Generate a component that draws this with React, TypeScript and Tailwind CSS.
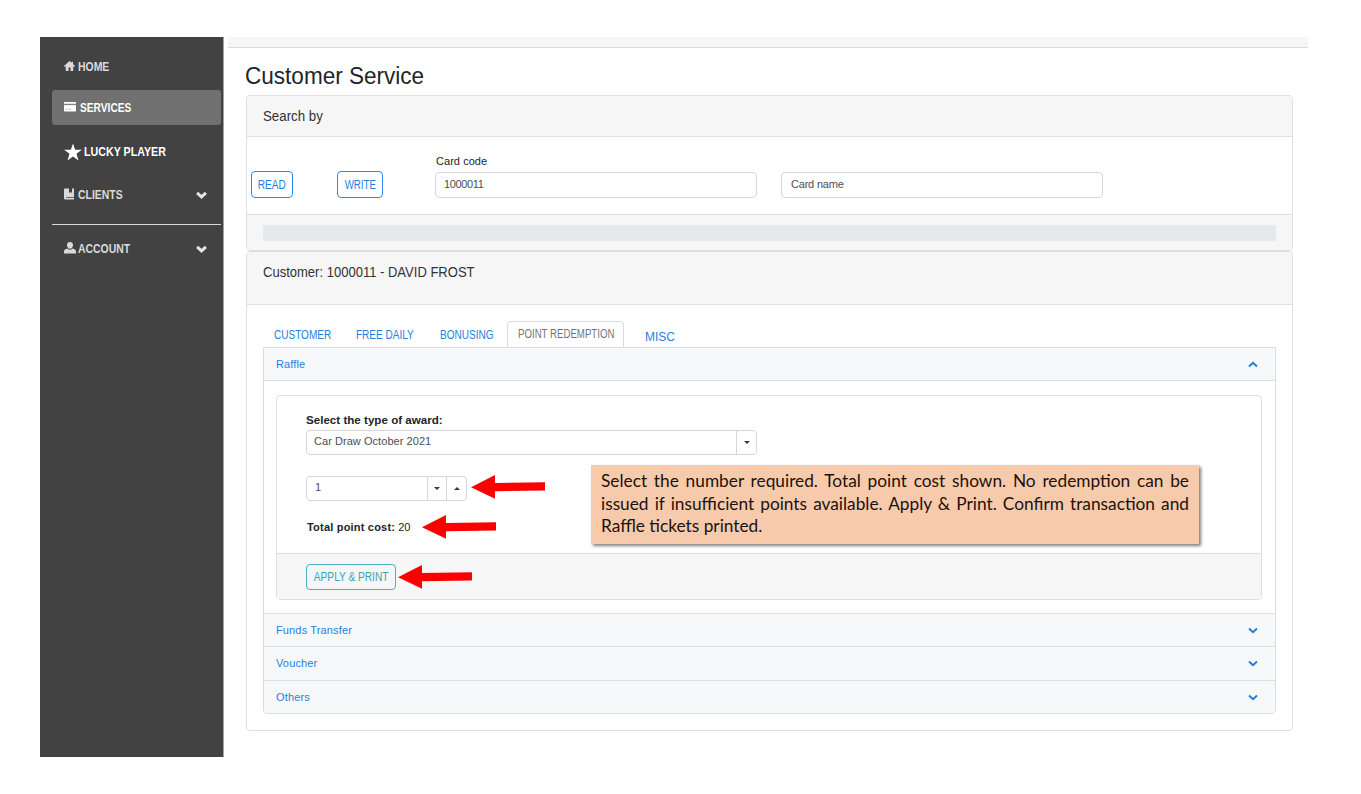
import { ReactNode } from "react";

function Chevron({ up = false, bold = false, className = "" }: { up?: boolean; bold?: boolean; className?: string }) {
  return (
    <svg viewBox="0 0 10 7" className={className} fill="none" stroke="currentColor">
      <path d={up ? "M1 5.5 L5 1.8 L9 5.5" : "M1 1.5 L5 5.2 L9 1.5"} strokeWidth={bold ? 2.7 : 2} />
    </svg>
  );
}

function Caret({ up = false }: { up?: boolean }) {
  return (
    <svg viewBox="0 0 6 3" className="h-[3px] w-[6px]" fill="#343a40">
      <path d={up ? "M0 3 L3 0 L6 3Z" : "M0 0 L6 0 L3 3Z"} />
    </svg>
  );
}

function HomeIcon() {
  return (
    <svg viewBox="0 0 22 20" className="relative -top-px h-[10px] w-[11px]" fill="#dadada">
      <path d="M11 0 L0 10 L1.5 12 L3.5 10.5 V20 H9 V13 H13 V20 H18.5 V10.5 L20.5 12 L22 10 L18 6.2 V1.5 H15 V3.5Z" />
    </svg>
  );
}

function CardIcon() {
  return (
    <svg viewBox="0 0 24 20" className="relative -top-px h-[10px] w-[12px]">
      <rect width="24" height="19" rx="1.5" fill="#fff" />
      <rect y="3.5" width="24" height="2.8" fill="#858585" />
      <path d="M3 14.5h4M9 14.5h5" stroke="#aaa" strokeWidth="1.5" />
    </svg>
  );
}

function StarIcon() {
  return (
    <svg viewBox="0 0 20 20" className="h-[18px] w-[18px]" fill="#fff">
      <path d="M10 0.6 L12.4 7.5 H19.8 L13.9 12 L16.1 19.4 L10 15 L3.9 19.4 L6.1 12 L0.2 7.5 H7.6Z" />
    </svg>
  );
}

function BookIcon() {
  return (
    <svg viewBox="0 0 20 24" className="relative -top-px h-[12px] w-[10px]" fill="#dadada">
      <path d="M2 1 H10 V10 L13 8 L16 10 V1 H20 V17.8 H4.5 V19.6 H20 V23 H3 Q0 23 0 20 V3 Q0 1 2 1Z" />
    </svg>
  );
}

function UserIcon() {
  return (
    <svg viewBox="0 0 22 22" className="relative -top-px h-[12px] w-[12px]" fill="#dadada">
      <path d="M11 0 C15 0 16.5 2.5 16.5 5.5 C16.5 9 14.5 12.5 11 12.5 S5.5 9 5.5 5.5 C5.5 2.5 7 0 11 0Z M6 12 Q11 16.5 16 12 Q22 13.5 22 17.5 V21 H0 V17.5 Q0 13.5 6 12Z" />
    </svg>
  );
}

function Arrow({ className }: { className: string }) {
  return (
    <svg viewBox="0 0 74 24" className={`absolute h-[24px] w-[74px] ${className}`} fill="#fb0000">
      <path d="M0 12.3 L24 0 V8 L74 7.2 V15.4 L24 16.2 V23.8Z" />
    </svg>
  );
}

function NavItem({ icon, label, arrow = false, className = "" }: { icon: ReactNode; label: ReactNode; arrow?: boolean; className?: string }) {
  return (
    <div className={`flex items-center pl-3 text-[12px] font-bold ${className}`}>
      {icon}
      {label}
      {arrow && <Chevron bold className="mr-[14px] ml-auto h-[8px] w-[11px] text-[#e4e4e4]" />}
    </div>
  );
}

function AccordionRow({ label, up = false, className = "" }: { label: string; up?: boolean; className?: string }) {
  return (
    <div className={`flex items-center justify-between bg-[#f7f8fa] pr-[17px] pl-3 text-[11px] tracking-[0.14px] text-[#1f7fe0] ${className}`}>
      <span>{label}</span>
      <Chevron up={up} className="h-[7px] w-[10px]" />
    </div>
  );
}

export default function App() {
  return (
    <div className="flex h-[794px] w-[1361px] overflow-hidden bg-white pt-[37px] pl-10 font-['Liberation_Sans',Arial,sans-serif] leading-none whitespace-nowrap text-[#212529]">
      <aside className="h-[720px] w-[184px] shrink-0 border-r border-[#a0a0a0] bg-[#424242] pl-3 text-[#dadada]">
        <NavItem className="mt-[18px] h-6" icon={<HomeIcon />} label={<span className="ml-[3px] origin-left scale-x-[0.87]">HOME</span>} />
        <NavItem className="mt-[11px] h-[35px] w-[169px] rounded-[3px] bg-[#707070] text-white" icon={<CardIcon />} label={<span className="ml-[4px] origin-left scale-x-[0.85]">SERVICES</span>} />
        <NavItem className="mt-[15px] h-6 text-white" icon={<StarIcon />} label={<span className="ml-[2px] origin-left scale-x-[0.89]">LUCKY PLAYER</span>} />
        <NavItem arrow className="mt-[19px] h-6 w-[169px]" icon={<BookIcon />} label={<span className="ml-1 origin-left scale-x-[0.87]">CLIENTS</span>} />
        <div className="mt-[17px] h-px w-[169px] bg-[#d8d8d8]" />
        <NavItem arrow className="mt-[12px] h-6 w-[169px]" icon={<UserIcon />} label={<span className="ml-[2px] origin-left scale-x-[0.87]">ACCOUNT</span>} />
      </aside>

      <main className="ml-1 w-[1080px] shrink-0">
        <div className="h-[11px] border-b border-[#dcdcdc] bg-[#f6f6f6]" />
        <h1 className="mt-[16px] ml-[17px] h-[31px] w-[200px] origin-left scale-x-[0.98] text-[23px] leading-6">Customer Service</h1>

        <section className="ml-[18px] h-[156px] w-[1047px] overflow-hidden rounded border border-[#dfdfdf]">
          <header className="flex h-10 items-center bg-[#f6f6f6] pl-4 text-[14px] text-[#303336]">
            <span className="origin-left scale-x-[0.95]">Search by</span>
          </header>
          <div className="flex h-[79px] border-y border-[#dfdfdf] pl-1">
            <button className="mt-[34px] flex h-[27px] w-[42px] items-center justify-center rounded border border-[#2d8cf0] text-[12px] text-[#1f7fe0]"><span className="scale-x-[0.84]">READ</span></button>
            <button className="mt-[34px] ml-[44px] flex h-[27px] w-[46px] items-center justify-center rounded border border-[#2d8cf0] text-[12px] text-[#1f7fe0]"><span className="scale-x-[0.81]">WRITE</span></button>
            <div className="mt-[19px] ml-[52px] w-[322px]">
              <div className="h-[16px] pl-px text-[11px] tracking-[0.05px]">Card code</div>
              <div className="flex h-[26px] items-center rounded border border-[#d3d6da] pb-px pl-2 text-[11px] tracking-[-0.35px] text-[#495057]">1000011</div>
            </div>
            <div className="mt-[35px] ml-[24px] flex h-[26px] w-[322px] items-center rounded border border-[#d3d6da] pb-px pl-[9px] text-[11px] tracking-[-0.2px] text-[#495057]">Card name</div>
          </div>
          <div className="h-[35px] bg-[#f6f6f6] px-4 pt-[10px]">
            <div className="h-4 rounded-[2px] bg-[#e6e9ec]" />
          </div>
        </section>

        <section className="ml-[18px] h-[480px] w-[1047px] overflow-hidden rounded border border-[#dfdfdf]">
          <header className="h-[53px] border-b border-[#dfdfdf] bg-[#f6f6f6] pt-[13px] pl-4 text-[14px] text-[#303336]">
            <span className="inline-block origin-left scale-x-[0.93]">Customer: 1000011 - DAVID FROST</span>
          </header>
          <div className="px-4 pt-4">
            <nav className="flex h-[26px] text-[12px] text-[#1f7fe0]">
              <span className="mt-[8px] ml-[11px] h-3 w-[82px]"><span className="inline-block origin-left scale-x-[0.835]">CUSTOMER</span></span>
              <span className="mt-[8px] h-3 w-[84px]"><span className="inline-block origin-left scale-x-[0.835]">FREE DAILY</span></span>
              <span className="mt-[8px] h-3 w-[67px]"><span className="inline-block origin-left scale-x-[0.835]">BONUSING</span></span>
              <span className="h-[26px] w-[117px] rounded-t border border-b-0 border-[#d9dcdf] bg-white pt-[6px] pl-[10px] text-[#6f767d]"><span className="inline-block origin-left scale-x-[0.805]">POINT REDEMPTION</span></span>
              <span className="mt-[10px] ml-[21px]">MISC</span>
            </nav>
            <div className="h-[367px] overflow-hidden rounded-b border border-[#d9dcdf]">
              <AccordionRow up className="h-[33px] border-b border-[#dfdfdf]" label="Raffle" />
              <div className="relative h-[232px] px-3 pt-[14px]">
                <div className="h-[205px] w-[986px] overflow-hidden rounded border border-[#dfdfdf]">
                  <div className="h-[157px] pt-[19px] pl-[29px]">
                    <div className="h-[15px] text-[11px] font-bold"><span className="inline-block origin-left scale-x-[1.055]">Select the type of award:</span></div>
                    <div className="flex h-[25px] w-[451px] rounded border border-[#d3d6da] text-[11px] tracking-[0.05px] text-[#495057]">
                      <span className="flex grow items-center pb-[2px] pl-[7px]">Car Draw October 2021</span>
                      <span className="flex w-[20px] items-center justify-center border-l border-[#d3d6da]"><Caret /></span>
                    </div>
                    <div className="mt-[21px] flex h-[25px] w-[161px] rounded border border-[#d3d6da] text-[11px] text-[#495057]">
                      <span className="flex grow items-center pb-[2px] pl-2">1</span>
                      <span className="flex w-[19px] items-center justify-center border-l border-[#d3d6da]"><Caret /></span>
                      <span className="flex w-[20px] items-center justify-center border-l border-[#d3d6da]"><Caret up /></span>
                    </div>
                    <div className="mt-[21px] pl-px text-[11px]"><b className="tracking-[0.2px]">Total point cost:</b> 20</div>
                  </div>
                  <div className="h-[47px] border-t border-[#dfdfdf] bg-[#f6f6f6] pt-[10px] pl-[29px]">
                    <button className="flex h-[26px] w-[90px] items-center justify-center rounded border border-[#4db0bf] text-[12px] text-[#35a5b6]"><span className="scale-x-[0.845]">APPLY &amp; PRINT</span></button>
                  </div>
                </div>
                <Arrow className="top-[94px] left-[207px]" />
                <Arrow className="top-[134px] left-[158px]" />
                <Arrow className="top-[184px] left-[134px]" />
                <div className="absolute top-[84px] left-[327px] h-[79px] w-[608px] bg-[#f7caac] px-[10px] pt-[5px] font-['Lato',sans-serif] text-[17.3px] leading-[22.5px] text-[#1c120c] shadow-[2px_2px_3px_rgba(0,0,0,0.5)]">
                  <div className="text-justify [text-align-last:justify]">Select the number required. Total point cost shown. No redemption can be</div>
                  <div className="text-justify [text-align-last:justify]">issued if insufficient points available. Apply &amp; Print. Confirm transaction and</div>
                  <div>Raffle tickets printed.</div>
                </div>
              </div>
              <AccordionRow className="h-[34px] border-y border-[#dfdfdf]" label="Funds Transfer" />
              <AccordionRow className="h-[33px]" label="Voucher" />
              <AccordionRow className="h-[33px] border-t border-[#dfdfdf]" label="Others" />
            </div>
          </div>
        </section>
      </main>
    </div>
  );
}
